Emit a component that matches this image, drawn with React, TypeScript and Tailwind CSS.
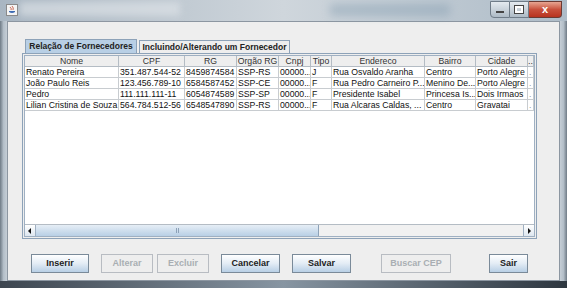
import React from 'react';

interface Col {
  name: string;
  w: string;
}

const cols: Col[] = [
  { name: 'Nome', w: 'w-[94px]' },
  { name: 'CPF', w: 'w-[66px]' },
  { name: 'RG', w: 'w-[52px]' },
  { name: 'Orgão RG', w: 'w-[42px]' },
  { name: 'Cnpj', w: 'w-[32px]' },
  { name: 'Tipo', w: 'w-[21px]' },
  { name: 'Endereco', w: 'w-[93px]' },
  { name: 'Bairro', w: 'w-[51px]' },
  { name: 'Cidade', w: 'w-[52px]' },
  { name: '...', w: 'w-[6px]' },
];

const rows: string[][] = [
  ['Renato Pereira', '351.487.544-52', '8459874584', 'SSP-RS', '00000...', 'J', 'Rua Osvaldo Aranha', 'Centro', 'Porto Alegre', '.'],
  ['João Paulo Reis', '123.456.789-10', '6584587452', 'SSP-CE', '00000...', 'F', 'Rua Pedro Carneiro P...', 'Menino De...', 'Porto Alegre', '.'],
  ['Pedro', '111.111.111-11', '6054874589', 'SSP-SP', '00000...', 'F', 'Presidente Isabel', 'Princesa Is...', 'Dois Irmaos', '.'],
  ['Lilian Cristina de Souza', '564.784.512-56', '6548547890', 'SSP-RS', '00000...', 'F', 'Rua Alcaras Caldas, ...', 'Centro', 'Gravatai', '.'],
];

const JButton: React.FC<{ label: string; w: string; disabled?: boolean }> = ({ label, w, disabled }) => (
  <div
    className={
      disabled
        ? `${w} h-[19px] flex items-center justify-center whitespace-nowrap border border-[#b8bcc2] bg-[#eeeeee] text-[#a9aeb3] text-[9px] font-bold`
        : `${w} h-[19px] flex items-center justify-center whitespace-nowrap border border-[#7a8a99] bg-gradient-to-b from-[#ffffff] via-[#e3ecf5] to-[#b8cfe5] text-[#222] text-[9px] font-bold`
    }
  >
    {label}
  </div>
);

const App: React.FC = () => {
  return (
    <div className="w-[567px] h-[288px] overflow-hidden flex flex-col bg-[#9aa7b3] font-['Liberation_Sans',Arial,sans-serif] select-none">
      {/* title bar */}
      <div className="h-[21px] shrink-0 flex items-start bg-gradient-to-r from-[#a9b6c2] via-[#cfd6dc] to-[#aebcc8] relative">
        <div className="absolute left-[20px] top-[2px] w-[160px] h-[14px] bg-[#dfe4e8] opacity-60 blur-[3px]" />
        <div className="absolute left-[330px] top-[4px] w-[120px] h-[12px] bg-[#7f99ad] opacity-40 blur-[4px]" />
        <div className="ml-[6px] mt-[4px] w-[12px] h-[12px] border border-[#8a8a8a] bg-[#f4f4f4] flex items-center justify-center relative">
          <svg width="10" height="10" viewBox="0 0 10 10">
            <path d="M3 2 Q5 4 4 5 M5 1 Q7 3 6 5" stroke="#c2462c" strokeWidth="0.8" fill="none" />
            <path d="M2 6 h6 v1 q-3 2 -6 0z" fill="#3d6bb3" />
          </svg>
        </div>
        <div className="ml-auto mr-[5px] mt-[1px] flex h-[17px] relative">
          <div className="w-[20px] h-[17px] border border-[#6f7c88] rounded-bl-[4px] bg-gradient-to-b from-[#e4eaef] to-[#aebbc6] flex items-end justify-center pb-[4px]">
            <div className="w-[8px] h-[2px] bg-white border border-[#444]" />
          </div>
          <div className="w-[19px] h-[17px] border-y border-r border-[#6f7c88] bg-gradient-to-b from-[#e4eaef] to-[#aebbc6] flex items-center justify-center">
            <div className="w-[8px] h-[7px] border-[2px] border-white outline outline-1 outline-[#444]" />
          </div>
          <div className="w-[33px] h-[17px] border-y border-r border-[#6b3a33] rounded-br-[4px] bg-gradient-to-b from-[#e6a592] via-[#c8503c] to-[#b8321e] flex items-center justify-center text-white text-[11px] font-bold">
            x
          </div>
        </div>
      </div>

      {/* body */}
      <div className="flex flex-1 min-h-0">
        <div className="w-[7px] shrink-0 bg-gradient-to-r from-[#6f7b86] via-[#b3bec8] to-[#c5ced6]" />
        <div className="w-[553px] h-[260px] bg-[#eeeeee] border border-[#8c96a1] flex flex-col pl-[14px] pt-[17px]">
          {/* tabs */}
          <div className="flex items-end h-[14px] ml-[3px]">
            <div className="w-[112px] h-[14px] border-t border-x border-[#8da2b8] bg-[#b8cfe5] text-[8.5px] font-bold text-[#222] whitespace-nowrap flex items-center justify-center">
              Relação de Fornecedores
            </div>
            <div className="w-[151px] h-[13px] ml-[2px] border-t border-x border-[#8da2b8] bg-[#eeeeee] text-[8.5px] font-bold text-[#222] whitespace-nowrap flex items-center justify-center">
              Incluindo/Alterando um Fornecedor
            </div>
          </div>
          {/* tab panel */}
          <div className="w-[515px] h-[186px] border border-[#8da2b8] p-[1px] bg-[#eeeeee]">
            <div className="w-full h-full border border-[#9fb0c2] bg-white flex flex-col text-[8.7px] leading-[11px] text-[#111]">
              <div className="flex h-[11px] bg-[#eeeeee] border-b border-[#b4bcc4] text-[#333]">
                {cols.map((c) => (
                  <div key={c.name} className={`${c.w} shrink-0 border-r border-[#b4bcc4] text-center overflow-hidden whitespace-nowrap`}>
                    {c.name}
                  </div>
                ))}
              </div>
              {rows.map((r, i) => (
                <div key={i} className="flex h-[11px] border-b border-[#c8ccd0]">
                  {r.map((v, j) => (
                    <div
                      key={j}
                      className={`${cols[j].w} shrink-0 border-r border-[#c8ccd0] pl-[1px] overflow-hidden whitespace-nowrap ${j === 9 ? 'text-[#999]' : ''}`}
                    >
                      {v}
                    </div>
                  ))}
                </div>
              ))}
              <div className="flex-1" />
              {/* horizontal scrollbar */}
              <div className="h-[12px] flex border-t border-[#b4bcc4] bg-[#eeeeee]">
                <div className="w-[11px] h-full border-r border-[#9fb0c2] bg-gradient-to-b from-white to-[#dde6ef] flex items-center justify-center">
                  <svg width="4" height="6" viewBox="0 0 4 6"><path d="M3 0 L0 3 L3 6z" fill="#111" /></svg>
                </div>
                <div className="w-[283px] h-full border-r border-[#8da2b8] bg-gradient-to-b from-[#e6eef6] to-[#b8cfe5] flex items-center justify-center">
                  <div className="w-[3px] h-[5px] border-x border-[#8da2b8]" />
                </div>
                <div className="flex-1 bg-[#f1f1f1]" />
                <div className="w-[11px] h-full border-l border-[#9fb0c2] bg-gradient-to-b from-white to-[#dde6ef] flex items-center justify-center">
                  <svg width="4" height="6" viewBox="0 0 4 6"><path d="M1 0 L4 3 L1 6z" fill="#111" /></svg>
                </div>
              </div>
            </div>
          </div>
          {/* buttons */}
          <div className="flex mt-[15px] ml-[9px]">
            <JButton label="Inserir" w="w-[58px]" />
            <div className="ml-[12px]"><JButton label="Alterar" w="w-[52px]" disabled /></div>
            <div className="ml-[4px]"><JButton label="Excluir" w="w-[52px]" disabled /></div>
            <div className="ml-[12px]"><JButton label="Cancelar" w="w-[59px]" /></div>
            <div className="ml-[12px]"><JButton label="Salvar" w="w-[59px]" /></div>
            <div className="ml-[30px]"><JButton label="Buscar CEP" w="w-[70px]" disabled /></div>
            <div className="ml-[38px]"><JButton label="Sair" w="w-[39px]" /></div>
          </div>
        </div>
        <div className="w-[7px] shrink-0 bg-gradient-to-r from-[#c5ced6] via-[#b3bec8] to-[#6f7b86]" />
      </div>
      <div className="h-[7px] shrink-0 bg-gradient-to-r from-[#3d4650] via-[#8795a2] to-[#2e3740]" />
    </div>
  );
};

export default App;
